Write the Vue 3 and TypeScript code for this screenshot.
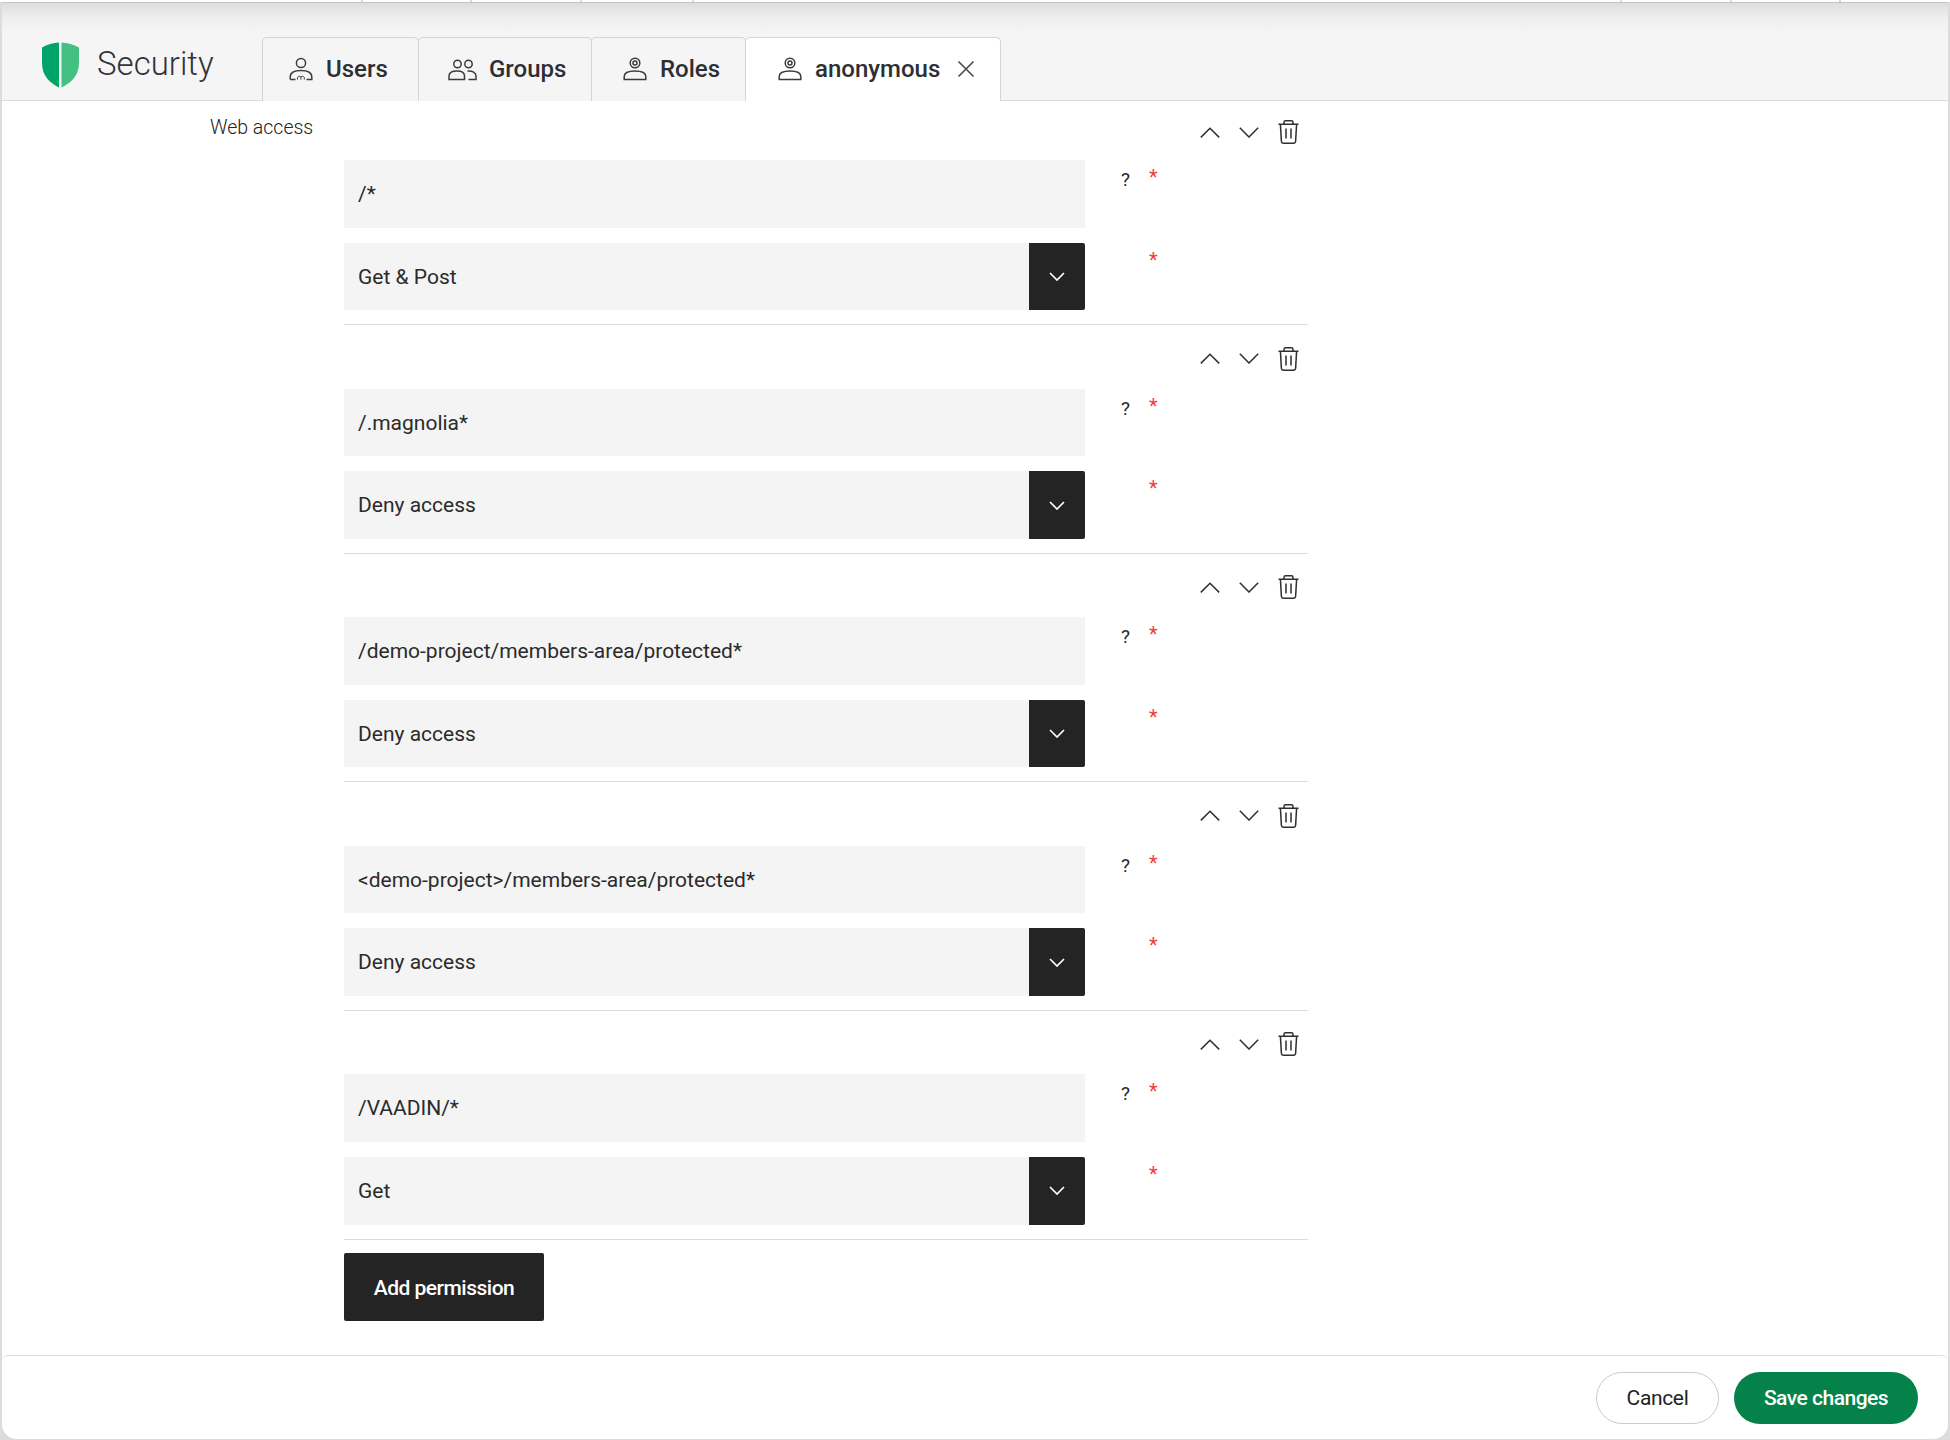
<script setup lang="ts">
interface Perm { path: string; access: string }
const perms: Perm[] = [
  { path: '/*', access: 'Get & Post' },
  { path: '/.magnolia*', access: 'Deny access' },
  { path: '/demo-project/members-area/protected*', access: 'Deny access' },
  { path: '<demo-project>/members-area/protected*', access: 'Deny access' },
  { path: '/VAADIN/*', access: 'Get' },
]
const ticks = [363, 109, 110, 112, 928, 110, 109]
</script>

<template>
  <div class="page">
    <div class="strip">
      <span v-for="(t, i) in ticks" :key="i" class="tick" :style="{ width: t + 'px' }"></span>
    </div>
    <div class="window">
      <header class="head">
        <div class="brand">
          <svg class="shield" viewBox="0 0 37 46" width="37" height="46">
            <path d="M17 0.5V45.5C8 41 0 34 0 21V5.5C5 2.5 11 1 17 0.5Z" fill="#00a469" />
            <path d="M19.5 0.5V45.5C28.5 41 37 34 37 21V5.5C31.5 2.5 25.5 1 19.5 0.5Z" fill="#44c085" />
          </svg>
          <span class="brand-name">Security</span>
        </div>
        <nav class="tabs">
          <div class="tab tab-users">
            <svg viewBox="0 0 24 24" width="24" height="24" class="ico">
              <circle cx="12" cy="6" r="4.6" />
              <path d="M1.2 22.6V20C1.2 16 5 13.6 12 13.6S22.8 16 22.8 20V22.6H17.5M1.2 22.6H6.5" />
              <path d="M8.5 22.6V20.4M11.9 22.6V19.6M15.3 22.6V20.4M8.5 20.4C9.5 19 11 19 11.9 20M11.9 20C13 19 14.5 19 15.3 20.4" stroke-width="1" />
            </svg>
            <span>Users</span>
          </div>
          <div class="tab tab-groups">
            <svg viewBox="0 0 29 24" width="29" height="24" class="ico">
              <circle cx="9.5" cy="7" r="3.7" />
              <circle cx="20.5" cy="7" r="3.7" />
              <path d="M1 22.6V19C1 15.6 4.5 14 9 14S16.5 15.6 16.5 19V22.6ZM19.5 14C24.5 13.6 28 15.5 28 19V22.6H20.5" />
            </svg>
            <span>Groups</span>
          </div>
          <div class="tab tab-roles">
            <svg viewBox="0 0 24 24" width="24" height="24" class="ico">
              <circle cx="12" cy="6" r="4.8" />
              <circle cx="12" cy="6" r="2" />
              <path d="M1.2 22.4V19.5C1.2 16 5 14 12 14S22.8 16 22.8 19.5V22.4Z" />
            </svg>
            <span>Roles</span>
          </div>
          <div class="tab tab-active">
            <svg viewBox="0 0 24 24" width="24" height="24" class="ico">
              <circle cx="12" cy="6" r="4.8" />
              <circle cx="12" cy="6" r="2" />
              <path d="M1.2 22.4V19.5C1.2 16 5 14 12 14S22.8 16 22.8 19.5V22.4Z" />
            </svg>
            <span>anonymous</span>
            <svg viewBox="0 0 18 18" width="18" height="18" class="close">
              <path d="M1.5 1.5L16.5 16.5M16.5 1.5L1.5 16.5" />
            </svg>
          </div>
        </nav>
      </header>

      <main class="content">
        <div class="label">Web access</div>
        <div class="list">
          <section v-for="p in perms" :key="p.path" class="perm">
            <div class="actions">
              <svg viewBox="0 0 20 11" width="20" height="11" class="act">
                <path d="M0.8 10.4L10 1.2L19.2 10.4" />
              </svg>
              <svg viewBox="0 0 20 11" width="20" height="11" class="act">
                <path d="M0.8 0.8L10 10L19.2 0.8" />
              </svg>
              <svg viewBox="0 0 21 24" width="21" height="24" class="act">
                <path d="M0.5 4.2H20.5M6 4V2.4C6 1.2 6.8 0.8 7.6 0.8H13.4C14.4 0.8 15 1.2 15 2.4V4M2.4 4.2L3.4 21.4C3.5 22.6 4.2 23.2 5.2 23.2H15.8C16.8 23.2 17.5 22.6 17.6 21.4L18.6 4.2M8 8.5V18.5M13 8.5V18.5" />
              </svg>
            </div>
            <div class="line">
              <div class="field"><span>{{ p.path }}</span></div>
              <span class="help">?</span>
              <span class="req">*</span>
            </div>
            <div class="line">
              <div class="field select">
                <span>{{ p.access }}</span>
                <div class="drop">
                  <svg viewBox="0 0 16 9" width="16" height="9" class="chev">
                    <path d="M1 1L8 8L15 1" />
                  </svg>
                </div>
              </div>
              <span class="help blank"></span>
              <span class="req">*</span>
            </div>
          </section>
          <button class="add" type="button">Add permission</button>
        </div>
      </main>

      <footer class="foot">
        <button class="btn cancel" type="button">Cancel</button>
        <button class="btn save" type="button">Save changes</button>
      </footer>
    </div>
  </div>
</template>

<style>
html, body { margin: 0; background: #d9d9d9; }
</style>

<style scoped>
.page {
  width: 1950px;
  height: 1440px;
  display: flex;
  flex-direction: column;
  overflow: hidden;
  background: #dcdcdc;
  font-family: Roboto, "Liberation Sans", sans-serif;
  color: #26262b;
}
.strip {
  height: 2px;
  display: flex;
  background: #fff;
  flex: none;
}
.tick {
  display: block;
  border-right: 2px solid #d8d8d8;
  box-sizing: border-box;
  flex: none;
}
.window {
  flex: 1;
  margin: 0 2px 1px 2px;
  min-height: 0;
  display: flex;
  flex-direction: column;
  background: #fff;
  border-radius: 0 0 15px 15px;
  overflow: hidden;
}
.head {
  height: 99px;
  flex: none;
  box-sizing: border-box;
  display: flex;
  align-items: flex-end;
  background: linear-gradient(180deg, #dedede 0, #eeeeee 14px, #f5f5f6 30px, #f5f5f6 100%);
  border-top: 1px solid #c4c4c4;
  border-bottom: 1.5px solid #dcdcdf;
}
.brand {
  width: 260px;
  flex: none;
  display: flex;
  align-items: center;
  align-self: stretch;
  box-sizing: border-box;
  padding: 29px 0 0 40px;
  gap: 18px;
}
.shield { flex: none; display: block; margin-top: -3px; }
.brand-name {
  font-size: 33px;
  font-weight: 300;
  color: #33333a;
  margin-top: -5px;
}
.tabs {
  display: flex;
  align-items: stretch;
  height: 65px;
  margin-bottom: -1.5px;
}
.tab {
  box-sizing: border-box;
  display: flex;
  align-items: center;
  gap: 13px;
  border: 1.5px solid #d3d3d8;
  border-bottom: 1.5px solid #dcdcdf;
  border-radius: 5px 5px 0 0;
  font-size: 24px;
  font-weight: 500;
  letter-spacing: 0;
  padding: 0 0 0 26px;
  color: #2e2e33;
  background: #f5f5f6;
  margin-right: -1px;
}
.tab-users { width: 157px; }
.tab-groups { width: 174px; padding-left: 29px; gap: 12px; }
.tab-roles { width: 155px; padding-left: 31px; gap: 13px; }
.tab-active {
  width: 256px;
  background: #fff;
  padding-left: 32px;
  border-bottom-color: #fff;
  font-weight: 500;
  gap: 13px;
}
.ico {
  flex: none;
  fill: none;
  stroke: #3a3a40;
  stroke-width: 1.5;
}
.close {
  flex: none;
  fill: none;
  stroke: #4a4a50;
  stroke-width: 1.6;
  margin-left: 4px;
}
.content {
  flex: 1;
  min-height: 0;
  display: flex;
  box-sizing: border-box;
  padding-left: 208px;
  background: #fff;
}
.label {
  width: 134px;
  flex: none;
  font-size: 19.5px;
  font-weight: 300;
  color: #222;
  padding-top: 15px;
  line-height: 24px;
}
.list {
  width: 964px;
  flex: none;
}
.perm {
  height: 228.6px;
  box-sizing: border-box;
  border-bottom: 1.5px solid #dcdcdc;
  padding-bottom: 14px;
  display: flex;
  flex-direction: column;
  justify-content: flex-end;
  gap: 15px;
}
.perm:first-child {
  height: 224.3px;
}
.actions {
  flex: 1;
  display: flex;
  justify-content: flex-end;
  align-items: center;
  gap: 19px;
  padding-right: 9px;
  padding-top: 18px;
}
.act {
  display: block;
  flex: none;
  fill: none;
  stroke: #2e2e33;
  stroke-width: 1.5;
}
.line {
  height: 67.6px;
  flex: none;
  display: flex;
  align-items: flex-start;
}
.field {
  width: 741px;
  height: 100%;
  flex: none;
  box-sizing: border-box;
  background: #f4f4f4;
  padding-left: 14px;
  display: flex;
  align-items: center;
  font-size: 21px;
  color: #2b2b2b;
}
.select {
  justify-content: space-between;
}
.drop {
  width: 56px;
  height: 100%;
  background: #242424;
  border-radius: 0 2px 2px 0;
  display: flex;
  align-items: center;
  justify-content: center;
}
.chev {
  display: block;
  fill: none;
  stroke: #fff;
  stroke-width: 1.7;
}
.help {
  width: 28px;
  margin-left: 36px;
  font-size: 19px;
  line-height: 20px;
  padding-top: 10px;
  color: #26262b;
  flex: none;
}
.help.blank { padding-top: 0; }
.req {
  color: #f33c3c;
  font-size: 20px;
  line-height: 20px;
  padding-top: 7px;
  flex: none;
}
.add {
  margin-top: 13.5px;
  width: 200px;
  height: 68px;
  background: #242424;
  color: #fff;
  border: 0;
  border-radius: 2px;
  font-family: inherit;
  font-size: 21px;
  font-weight: 500;
  letter-spacing: -0.5px;
  padding: 2px 0 0;
  display: block;
}
.foot {
  height: 84px;
  flex: none;
  box-sizing: border-box;
  border-top: 1.5px solid #dcdcdc;
  border-radius: 6px 6px 0 0;
  background: #fff;
  display: flex;
  justify-content: flex-end;
  align-items: center;
  gap: 15px;
  padding: 0 30px 0 0;
}
.btn {
  height: 52px;
  border-radius: 26px;
  font-family: inherit;
  font-size: 21px;
  letter-spacing: -0.35px;
  padding: 0;
}
.cancel {
  width: 123px;
  background: #fff;
  border: 1px solid #cccccc;
  color: #222;
}
.save {
  width: 184px;
  background: #05824a;
  border: 0;
  color: #fff;
  font-weight: 500;
  letter-spacing: -0.5px;
}
</style>
